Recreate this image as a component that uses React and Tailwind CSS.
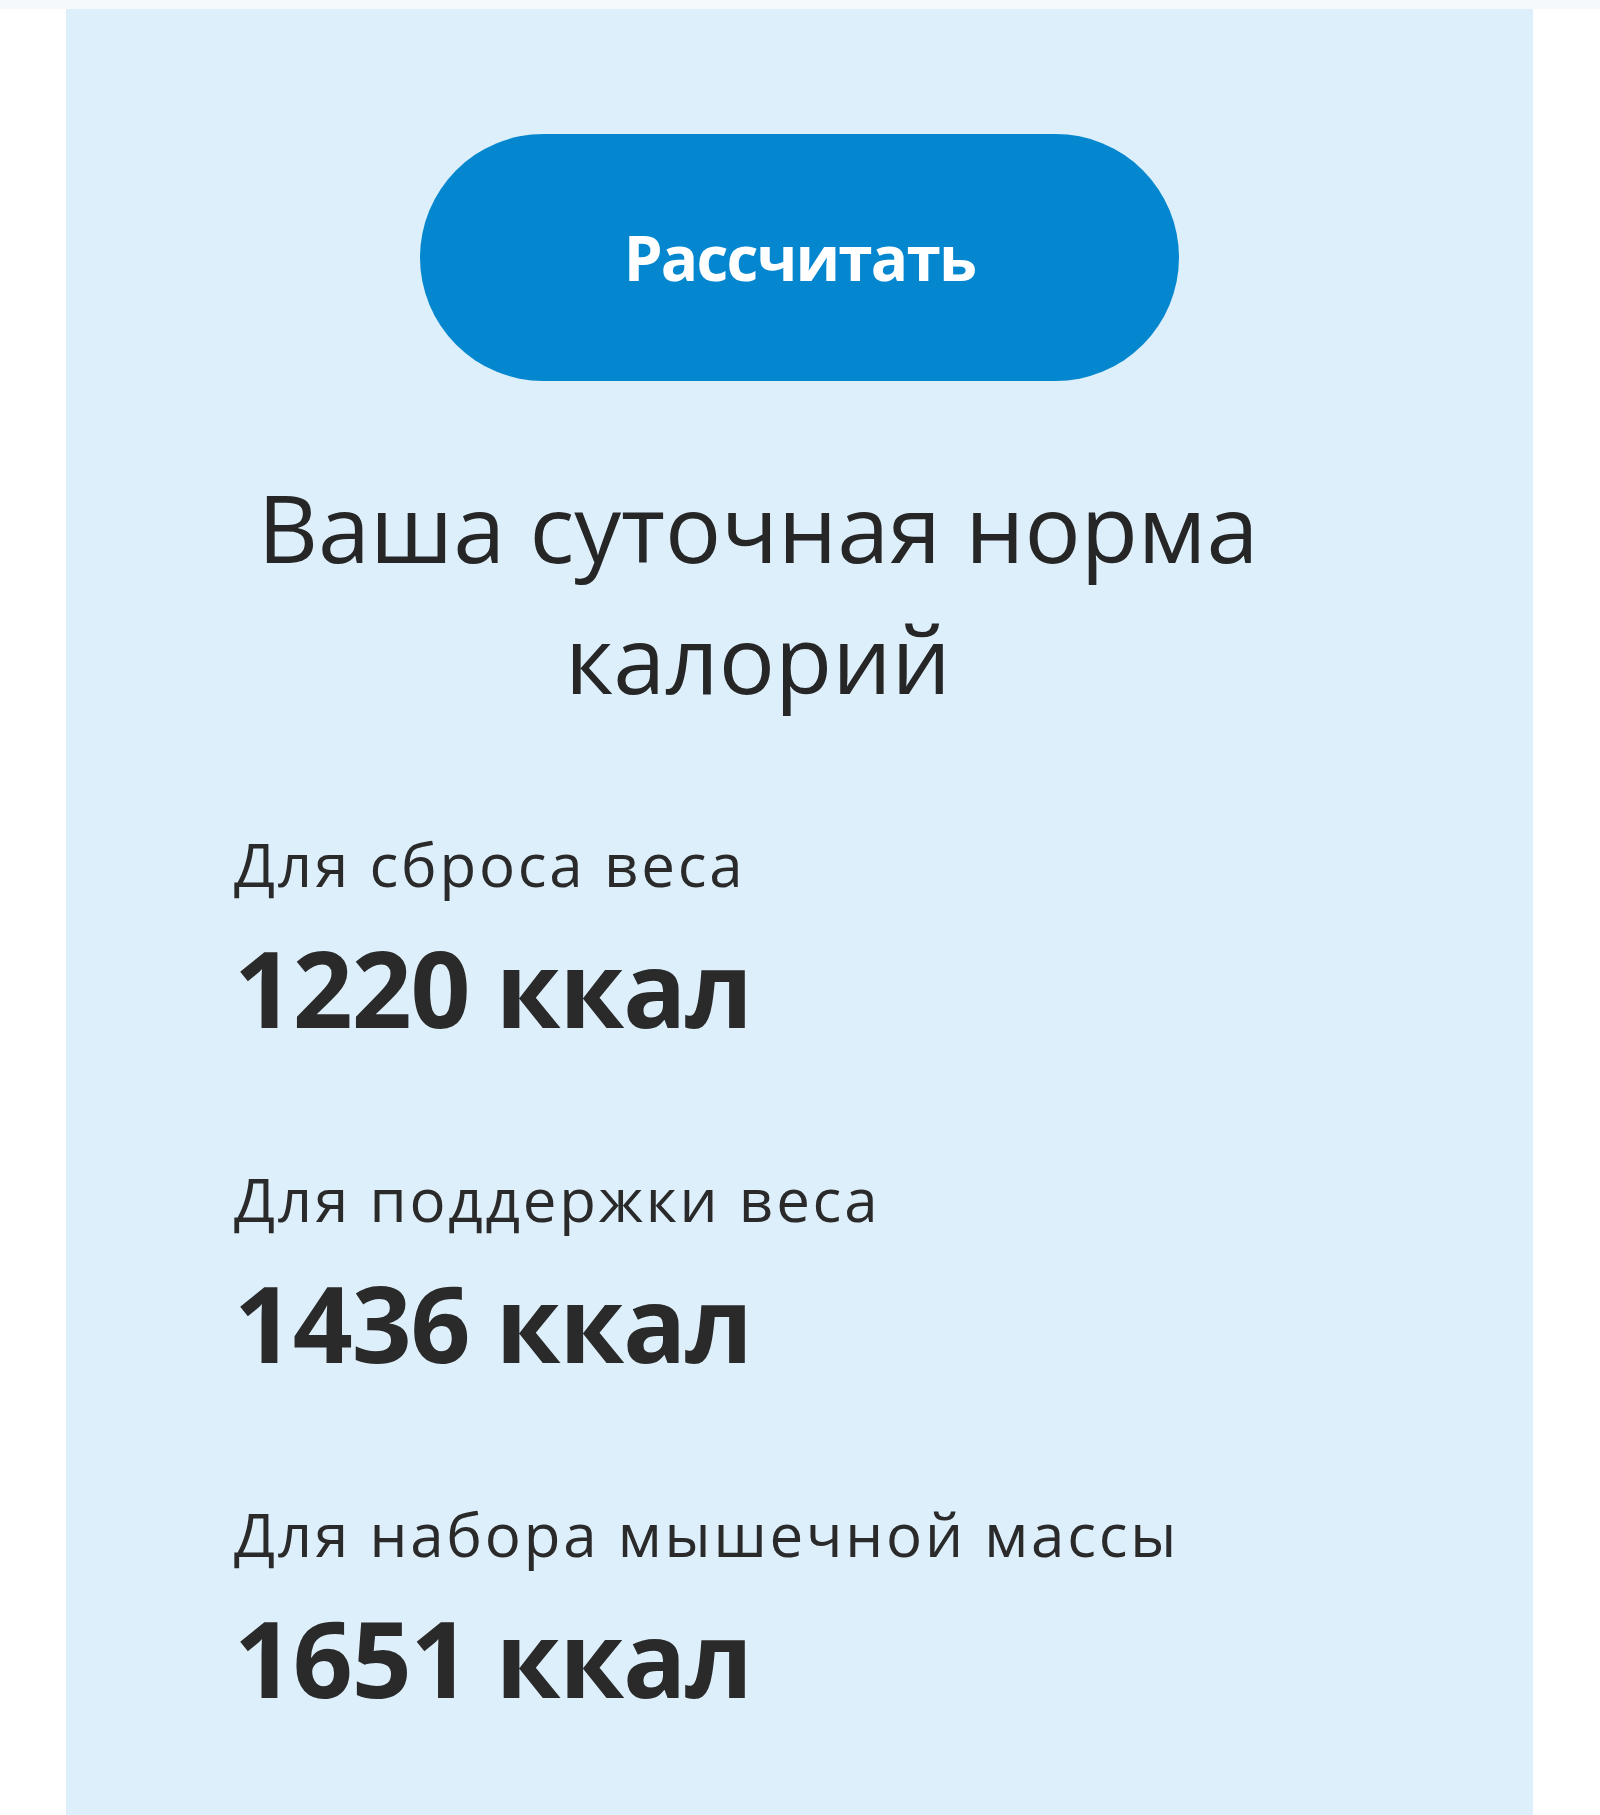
import React from 'react';

const results = [
    { label: 'Для сброса веса', value: 1220 },
    { label: 'Для поддержки веса', value: 1436 },
    { label: 'Для набора мышечной массы', value: 1651 },
];

export default function App() {
    return (
        <div className="min-h-[1815px] bg-white font-['Open_Sans',sans-serif] text-[#2a2a2a]">
            <div className="h-[9px] bg-[#f6f9fb]" />
            <div className="ml-[66px] w-[1467px] min-h-[1806px] bg-[#ddeffa] pt-[125px] pb-[100px]">
                <div className="flex justify-center">
                    <button className="w-[759px] h-[247px] rounded-full bg-[#0587cf] text-white font-bold text-[62px] tracking-[-1.8px]">
                        Рассчитать
                    </button>
                </div>

                <div className="pl-[168px] pr-[251px]">
                    <h2 className="mt-[80px] text-center text-[93.5px] leading-[131px] font-normal text-[#262626]">
                        Ваша суточная норма<br />калорий
                    </h2>

                    <div className="mt-[101px] flex flex-col gap-[111px]">
                        {results.map(r => (
                            <div key={r.value} className="flex flex-col gap-[24px]">
                                <p className="text-[60px] leading-[80px] tracking-[2.8px]">{r.label}</p>
                                <p className="text-[105px] leading-[120px] font-bold tracking-[-1.2px]">{r.value} ккал</p>
                            </div>
                        ))}
                    </div>
                </div>
            </div>
        </div>
    );
}
